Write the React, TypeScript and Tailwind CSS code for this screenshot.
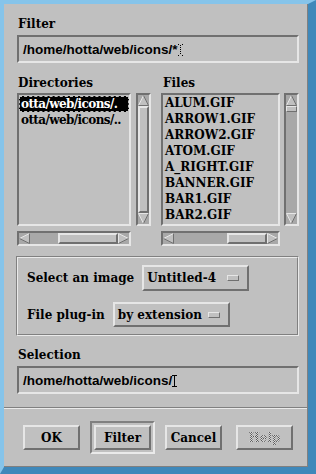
import React from "react";

const SERIF = "font-['DejaVu_Serif',serif] font-bold text-[12px] leading-[14px] text-black";
const SANS = "font-['Liberation_Sans',Arial,sans-serif] font-bold text-[13.5px] text-black";
const SUNKEN =
  "border-2 border-t-[#707070] border-l-[#707070] border-r-[#e6e6e6] border-b-[#e6e6e6]";
const RAISED =
  "border-2 border-t-[#e6e6e6] border-l-[#e6e6e6] border-r-[#707070] border-b-[#707070]";

const LIGHT = "#e6e6e6";
const DARK = "#707070";
const FILL = "#c0c0c0";

function Arrow({ dir }: { dir: "up" | "down" | "left" | "right" }) {
  let pts = "";
  let lines: React.ReactNode = null;
  if (dir === "up") {
    pts = "5.5,0.5 0.5,10.5 10.5,10.5";
    lines = (
      <>
        <line x1="5.5" y1="0.5" x2="0.5" y2="10.5" stroke={LIGHT} />
        <line x1="0.5" y1="10.5" x2="10.5" y2="10.5" stroke={DARK} />
        <line x1="10.5" y1="10.5" x2="5.5" y2="0.5" stroke={DARK} />
      </>
    );
  } else if (dir === "down") {
    pts = "0.5,0.5 10.5,0.5 5.5,10.5";
    lines = (
      <>
        <line x1="0.5" y1="0.5" x2="10.5" y2="0.5" stroke={LIGHT} />
        <line x1="0.5" y1="0.5" x2="5.5" y2="10.5" stroke={LIGHT} />
        <line x1="10.5" y1="0.5" x2="5.5" y2="10.5" stroke={DARK} />
      </>
    );
  } else if (dir === "left") {
    pts = "0.5,5.5 10.5,0.5 10.5,10.5";
    lines = (
      <>
        <line x1="0.5" y1="5.5" x2="10.5" y2="0.5" stroke={LIGHT} />
        <line x1="0.5" y1="5.5" x2="10.5" y2="10.5" stroke={DARK} />
        <line x1="10.5" y1="0.5" x2="10.5" y2="10.5" stroke={DARK} />
      </>
    );
  } else {
    pts = "0.5,0.5 10.5,5.5 0.5,10.5";
    lines = (
      <>
        <line x1="0.5" y1="0.5" x2="0.5" y2="10.5" stroke={LIGHT} />
        <line x1="0.5" y1="0.5" x2="10.5" y2="5.5" stroke={LIGHT} />
        <line x1="0.5" y1="10.5" x2="10.5" y2="5.5" stroke={DARK} />
      </>
    );
  }
  return (
    <svg width="11" height="11" viewBox="0 0 11 11" className="block shrink-0">
      <polygon points={pts} fill={FILL} />
      {lines}
    </svg>
  );
}

function VScroll({ full }: { full: boolean }) {
  return (
    <div className={`w-[15px] h-full bg-[#a8a8a8] flex flex-col ${SUNKEN}`}>
      <Arrow dir="up" />
      {full ? (
        <div className={`flex-1 bg-[#c0c0c0] ${RAISED}`} />
      ) : (
        <>
          <div className="h-[6px] bg-[#c0c0c0] border border-t-[#e6e6e6] border-l-[#e6e6e6] border-r-[#707070] border-b-[#707070]" />
          <div className="flex-1" />
        </>
      )}
      <Arrow dir="down" />
    </div>
  );
}

function HScroll({ slider }: { slider: string }) {
  return (
    <div className={`h-[15px] w-full bg-[#a8a8a8] flex flex-row ${SUNKEN}`}>
      <Arrow dir="left" />
      <div className="flex-1" />
      <div className={`${slider} h-full bg-[#c0c0c0] ${RAISED}`} />
      <Arrow dir="right" />
    </div>
  );
}

function IBeam({ dotted }: { dotted?: boolean }) {
  return (
    <svg width="5" height="12" viewBox="0 0 5 12" className="inline-block align-[-2px]">
      {dotted ? (
        <g fill="#000">
          <rect x="0" y="0" width="1" height="1" />
          <rect x="4" y="0" width="1" height="1" />
          <rect x="2" y="1" width="1" height="1" />
          <rect x="2" y="3" width="1" height="1" />
          <rect x="2" y="5" width="1" height="1" />
          <rect x="2" y="7" width="1" height="1" />
          <rect x="2" y="9" width="1" height="1" />
          <rect x="0" y="11" width="1" height="1" />
          <rect x="4" y="11" width="1" height="1" />
        </g>
      ) : (
        <g fill="#000">
          <rect x="0" y="0" width="2" height="1" />
          <rect x="3" y="0" width="2" height="1" />
          <rect x="2" y="0" width="1" height="12" />
          <rect x="0" y="11" width="2" height="1" />
          <rect x="3" y="11" width="2" height="1" />
        </g>
      )}
    </svg>
  );
}

function TextField({ text, dotted }: { text: string; dotted?: boolean }) {
  return (
    <div className={`h-[28px] w-full ${SUNKEN} bg-[#c0c0c0] pl-[4px] pt-[5px] leading-[16px] ${SANS} whitespace-nowrap overflow-hidden`}>
      {text}
      <IBeam dotted={dotted} />
    </div>
  );
}

function OptionMenu({ label, w }: { label: string; w: string }) {
  return (
    <div className={`${w} h-full ${RAISED} bg-[#c0c0c0] flex items-center justify-between pl-[3px] pr-[8px]`}>
      <span className={SERIF}>{label}</span>
      <div className="w-[12px] h-[6px] bg-[#c0c0c0] border border-t-[#e6e6e6] border-l-[#e6e6e6] border-r-[#707070] border-b-[#707070]" />
    </div>
  );
}

function PushButton({ label, insensitive }: { label: string; insensitive?: boolean }) {
  return (
    <div className={`w-[57px] h-[25px] ${RAISED} bg-[#c0c0c0] flex items-center justify-center`}>
      {insensitive ? (
        <span className="font-['DejaVu_Serif',serif] font-bold text-[12px] leading-[14px] text-transparent bg-clip-text bg-[repeating-conic-gradient(#5a5a5a_0_25%,#d8d8d8_0_50%)] bg-size-[2px_2px]">
          {label}
        </span>
      ) : (
        <span className={SERIF}>{label}</span>
      )}
    </div>
  );
}

const files = [
  "ALUM.GIF",
  "ARROW1.GIF",
  "ARROW2.GIF",
  "ATOM.GIF",
  "A_RIGHT.GIF",
  "BANNER.GIF",
  "BAR1.GIF",
  "BAR2.GIF",
];

export default function App() {
  return (
    <div className="w-[316px] h-[474px] bg-[#3c86b8] flex flex-col">
      <div className="flex-1 flex flex-col border-l-4 border-t-4 border-r-[8px] border-b-[7px] border-l-[#86c4ea] border-t-[#86c4ea] border-r-[#3f88ba] border-b-[#3f88ba]">
        <div className="flex-1 flex flex-col bg-[#c0c0c0] border-r border-b border-r-[#808080] border-b-[#808080]">
          <div className="flex flex-col pl-[13px] pr-[8px] pt-[13px]">
            <div className={`${SERIF} pl-[1px]`}>Filter</div>
            <div className="mt-[4px]">
              <TextField text="/home/hotta/web/icons/*" dotted />
            </div>
            <div className="mt-[13px] flex">
              <div className={`${SERIF} w-[145px] pl-[1px]`}>Directories</div>
              <div className={`${SERIF} pl-[1px]`}>Files</div>
            </div>
            <div className="mt-[3px] h-[133px] flex">
              <div className={`w-[114px] h-full ${SUNKEN} bg-[#c0c0c0] overflow-hidden`}>
                <div className={`${SERIF} tracking-[-0.6px] leading-[16px] mt-[1px] h-[16px] bg-black text-white pl-[1px] whitespace-nowrap border border-dashed border-[#c0c0c0] overflow-hidden`}>
                  <span className="relative top-[-1px]">otta/web/icons/.</span>
                </div>
                <div className={`${SERIF} tracking-[-0.6px] leading-[16px] pl-[2px] whitespace-nowrap`}>otta/web/icons/..</div>
              </div>
              <div className="ml-[5px] h-full">
                <VScroll full />
              </div>
              <div className={`ml-[10px] w-[119px] h-full ${SUNKEN} bg-[#c0c0c0] overflow-hidden pl-[2px]`}>
                {files.map((f) => (
                  <div key={f} className={`${SERIF} leading-[16px] h-[16px] whitespace-nowrap`}>
                    {f}
                  </div>
                ))}
              </div>
              <div className="ml-[4px] h-full">
                <VScroll full={false} />
              </div>
            </div>
            <div className="mt-[5px] flex">
              <div className="w-[114px]">
                <HScroll slider="w-[60px]" />
              </div>
              <div className="ml-[30px] w-[119px]">
                <HScroll slider="w-[40px]" />
              </div>
            </div>
            <div className="mt-[10px] -ml-[1px] h-[80px] border border-t-[#808080] border-l-[#808080] border-r-[#eaeaea] border-b-[#eaeaea]">
              <div className="h-full border border-t-[#eaeaea] border-l-[#eaeaea] border-r-[#808080] border-b-[#808080] pl-[9px] pt-[7px] flex flex-col">
                <div className="h-[26px] flex items-center gap-[8px]">
                  <span className={SERIF}>Select an image</span>
                  <OptionMenu label="Untitled-4" w="w-[107px]" />
                </div>
                <div className="mt-[11px] h-[25px] flex items-center gap-[8px]">
                  <span className={SERIF}>File plug-in</span>
                  <OptionMenu label="by extension" w="w-[117px]" />
                </div>
              </div>
            </div>
            <div className={`${SERIF} pl-[1px] mt-[12px]`}>Selection</div>
            <div className="mt-[4px]">
              <TextField text="/home/hotta/web/icons/" />
            </div>
          </div>
          <div className="mt-[13px] h-[2px] border-t border-b border-t-[#808080] border-b-[#eaeaea]" />
          <div className="mt-[12px] flex pl-[15px] gap-[6px]">
            <div className="p-[4px]">
              <PushButton label="OK" />
            </div>
            <div className="p-[2px] border-2 border-t-[#808080] border-l-[#808080] border-r-[#eaeaea] border-b-[#eaeaea]">
              <PushButton label="Filter" />
            </div>
            <div className="p-[4px]">
              <PushButton label="Cancel" />
            </div>
            <div className="p-[4px]">
              <PushButton label="Help" insensitive />
            </div>
          </div>
        </div>
      </div>
    </div>
  );
}
